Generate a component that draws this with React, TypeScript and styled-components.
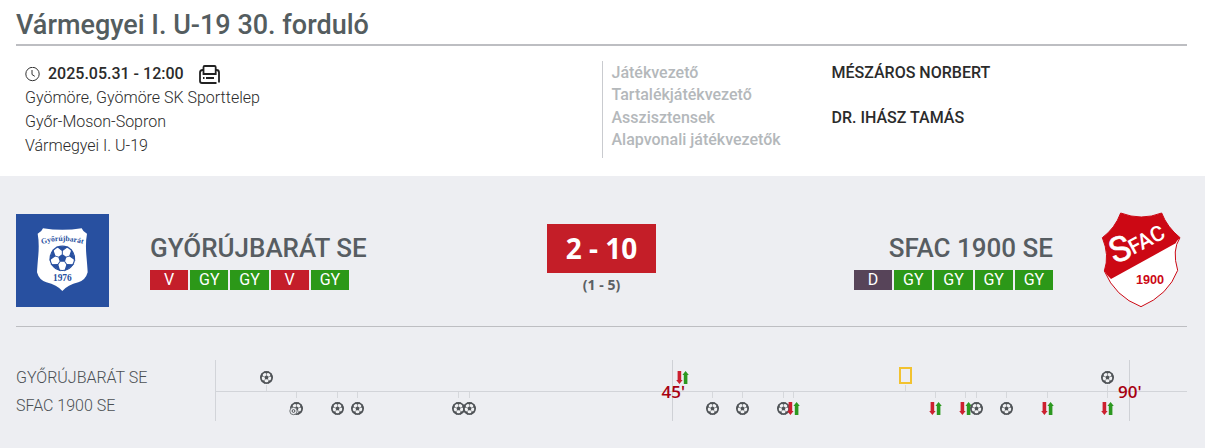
import React from "react";
import styled, { createGlobalStyle } from "styled-components";

const GlobalStyle = createGlobalStyle`
  *, *::before, *::after { box-sizing: border-box; }
  body {
    margin: 0;
    background: #fff;
    color: #2b2b2b;
    font: 16px/24px Roboto, "Open Sans", sans-serif;
  }
  h1, h2, p, dl, dt, dd, ol, ul { margin: 0; padding: 0; }
  ol, ul { list-style: none; }
`;

/* ---------- header ---------- */

const Header = styled.header`
  padding: 0 18px 0 16px;
`;

const Title = styled.h1`
  padding: 9px 0 3px;
  border-bottom: 2px solid #bdbec2;
  color: #545d5f;
  font-size: 27px;
  line-height: 32px;
  font-weight: 500;
`;

const Details = styled.div`
  display: grid;
  grid-template-columns: 1fr 1fr;
  padding: 15px 0 18px;
`;

const Venue = styled.div`
  padding: 1px 0 0 9px;
  font-weight: 300;
`;

const DateRow = styled.div`
  display: flex;
  align-items: center;
  gap: 8px;
  font-weight: 500;
`;

const PrintButton = styled.button`
  display: flex;
  margin-left: 7px;
  padding: 0;
  border: 0;
  background: none;
  color: #222;
  cursor: pointer;
`;

const Officials = styled.dl`
  display: grid;
  grid-template-columns: 220px 1fr;
  align-content: space-between;
  padding: 1px 0 7px 9px;
  border-left: 1px solid #c9cbcf;
  line-height: 22px;
  font-weight: 500;
`;

const Role = styled.dt`
  color: #b4b8bb;
`;

const Official = styled.dd``;

/* ---------- match ---------- */

const Match = styled.main`
  padding: 38px 18px 27px 16px;
  background: #edeef2;
`;

const Scoreboard = styled.section`
  display: grid;
  grid-template-columns: 1fr 109px 1fr;
  padding-bottom: 19px;
  border-bottom: 1px solid #bdbec2;
`;

const Team = styled.div<{ $away?: boolean }>`
  display: flex;
  flex-direction: ${(p) => (p.$away ? "row-reverse" : "row")};
  gap: 41px;
  text-align: ${(p) => (p.$away ? "right" : "left")};
`;

const Crest = styled.svg`
  flex: none;
  width: 93px;
  height: 93px;
  overflow: visible;
`;

const TeamBody = styled.div<{ $away?: boolean }>`
  display: flex;
  flex-direction: column;
  align-items: ${(p) => (p.$away ? "flex-end" : "flex-start")};
  gap: 6px;
  padding-top: 18px;
`;

const TeamName = styled.h2`
  color: #575d62;
  font-size: 26px;
  line-height: 32px;
  font-weight: 500;
`;

const Form = styled.ol`
  display: grid;
  grid-template-columns: repeat(5, 1fr);
  gap: 2px;
  width: 199px;
`;

type Result = "V" | "D" | "GY";
const resultColor: Record<Result, string> = { V: "#c41e2a", D: "#574459", GY: "#2c9818" };

const FormItem = styled.li<{ $result: Result }>`
  background: ${(p) => resultColor[p.$result]};
  color: #fff;
  line-height: 20px;
  text-align: center;
`;

const Score = styled.div`
  padding-top: 10px;
  text-align: center;
  font-family: "Open Sans", sans-serif;
  font-weight: 700;
`;

const FullTime = styled.p`
  background: #c41e28;
  color: #fff;
  font-size: 28px;
  line-height: 49px;
`;

const HalfTime = styled.p`
  color: #5b6064;
  font-size: 14px;
`;

/* ---------- timeline ---------- */

const Timeline = styled.section`
  display: grid;
  grid-template-columns: 199px 1fr;
  margin-top: 33px;
`;

const TimelineNames = styled.div`
  padding-top: 4px;
  color: #4b5054;
  line-height: 28px;
  font-weight: 300;
`;

const Lanes = styled.div`
  position: relative;
  display: grid;
  grid-template-rows: 31px 30px;
  border-left: 1px solid #d2d4d9;
`;

const Lane = styled.ol`
  position: relative;
  & + & { border-top: 1px solid #d2d4d9; }
`;

const Event = styled.li<{ $away?: boolean }>`
  position: absolute;
  ${(p) => (p.$away ? "top: 0;" : "bottom: 0;")}
  display: flex;
  flex-direction: ${(p) => (p.$away ? "column-reverse" : "column")};
  align-items: center;
  gap: ${(p) => (p.$away ? "4px" : "1px")};
  width: 13px;
  margin-left: -7px;

  &::after {
    content: "";
    width: 1px;
    height: 6px;
    background: #d6d8dc;
  }
`;

const Marker = styled.div`
  position: absolute;
  top: 0;
  bottom: 0;
  width: 1px;
  background: #cfd1d6;
`;

const MarkerLabel = styled.span`
  position: absolute;
  top: 20px;
  left: 1px;
  transform: translateX(-50%);
  color: #a80010;
  font-family: "Open Sans", sans-serif;
  font-size: 17px;
  font-weight: 600;
`;

/* ---------- drawings ---------- */

const ClockIcon = () => (
  <svg width="15" height="15" viewBox="0 0 15 15" fill="none" stroke="#333" aria-hidden="true">
    <circle cx="7.5" cy="7" r="6.7" />
    <path d="M7 3v4.500l2.800 1.800" />
  </svg>
);

const PrinterIcon = () => (
  <svg width="21" height="19" viewBox="0 0 21 19" fill="none" stroke="currentColor" strokeWidth="1.8" aria-hidden="true">
    <path d="M4.500 9V2.200Q4.500 1 5.700 1h9.800Q16.700 1 16.700 2.200V9Z" />
    <path d="M4.500 5H3.500Q1 5 1 7.500V16Q1 18 3 18H17.500" />
    <path d="M16.700 5h.800Q20 5 20 7.500V17.500" />
    <path d="M4 13h1.500M7 13h8" />
  </svg>
);

const pentagon = (r: number) =>
  Array.from({ length: 5 }, (_, i) => {
    const a = (i * 72 * Math.PI) / 180;
    return `${(r * Math.sin(a)).toFixed(2)},${(-r * Math.cos(a)).toFixed(2)}`;
  }).join(" ");

const BallShape = ({ dark, light, ring = 1 }: { dark: string; light: string; ring?: number }) => (
  <>
    <circle r={6.5 - ring / 2} fill={light} stroke={dark} strokeWidth={ring} />
    <polygon points={pentagon(2.2)} fill={dark} />
    {[0, 72, 144, 216, 288].map((a) => (
      <g key={a} transform={`rotate(${a})`}>
        <path d="M-2.300 -5.700L0 -4L2.300 -5.700Z" fill={dark} stroke={dark} strokeWidth=".6" />
        <path d="M0 -2V-4" stroke={dark} strokeWidth=".5" />
      </g>
    ))}
  </>
);

const Ball = ({ penalty }: { penalty?: boolean }) => (
  <svg width="13" height="13" viewBox="-6.500 -6.500 13 13" overflow="visible" role="img" aria-label="Gól">
    <BallShape dark="#505458" light="#f0f1f3" ring={1.7} />
    {penalty && (
      <>
        <circle cx="-3" cy="2.500" r="3.700" fill="#edeef2" stroke="#606468" strokeWidth=".9" />
        <circle cx="-3" cy="2.500" r="1.400" fill="none" stroke="#505458" />
      </>
    )}
  </svg>
);

const Swap = () => (
  <svg width="13" height="13" viewBox="0 0 13 13" role="img" aria-label="Csere">
    <path d="M1.600 0h3.600v9H6.600L3.400 13L.2 9H1.600Z" fill="#cc2030" />
    <path d="M7.800 13h3.600V4h1.400L9.600 0L6.400 4H7.800Z" fill="#2c9820" />
  </svg>
);

const Card = () => (
  <svg width="13" height="17" viewBox="0 0 13 17" role="img" aria-label="Sárga lap">
    <rect x="1" y="1" width="11" height="15" fill="none" stroke="#f2c230" strokeWidth="2" />
  </svg>
);

const HomeCrest = () => (
  <Crest viewBox="48 42 279 279" role="img" aria-label="Győrújbarát SE">
    <rect x="48" y="42" width="279" height="279" fill="#2850a0" />
    <path
      d="M129 85Q187 94 245 85Q249 96 261 101Q256 128 259 165Q262 198 263 217Q257 240 235 247Q203 255 187 273Q171 255 139 247Q117 240 111 217Q112 198 115 165Q118 128 113 101Q125 96 129 85Z"
      fill="#fff"
    />
    <path id="crest-arc" d="M119 134Q187 112 255 134" fill="none" />
    <text fill="#2850a0" fontFamily="Liberation Serif, serif" fontWeight="700" fontSize="23" textAnchor="middle">
      <textPath href="#crest-arc" startOffset="50%">Győrújbarát</textPath>
    </text>
    <g transform="translate(187 175) scale(5.900)">
      <BallShape dark="#2850a0" light="#fff" ring={0.6} />
    </g>
    <text x="187" y="244" fill="#2850a0" fontFamily="Liberation Serif, serif" fontWeight="700" fontSize="28" textAnchor="middle">
      1976
    </text>
  </Crest>
);

const AwayCrest = () => (
  <Crest viewBox="-3 27 279 279" role="img" aria-label="SFAC 1900 SE">
    <path
      d="M77 24Q139 48 200 24Q216 66 255 98Q230 135 248 196Q220 270 138 305Q60 275 28 198Q44 150 22 98Q60 70 77 24Z"
      fill="#fff"
      stroke="#cc0814"
      strokeWidth="3"
    />
    <path d="M77 24Q139 48 200 24Q216 66 255 98Q246 106 242 115L48 222Q36 212 28 198Q44 150 22 98Q60 70 77 24Z" fill="#cc0814" />
    <g fill="#fff" fontFamily="Roboto, sans-serif" fontWeight="500">
      <text transform="translate(74 131) rotate(-20)" y="37" fontSize="104" fontWeight="400" stroke="#fff" strokeWidth="2" textAnchor="middle">
        S
      </text>
      <text transform="translate(115 150) rotate(-28)" fontSize="64">
        FAC
      </text>
    </g>
    <text x="165" y="237" fill="#cc0814" fontFamily="Liberation Sans, sans-serif" fontWeight="700" fontSize="38" textAnchor="middle">
      1900
    </text>
  </Crest>
);

/* ---------- data ---------- */

type Kind = "goal" | "penalty" | "swap" | "card";
type MatchEvent = { minute: number; kind: Kind };

const homeEvents: MatchEvent[] = [
  { minute: 5, kind: "goal" },
  { minute: 46, kind: "swap" },
  { minute: 68, kind: "card" },
  { minute: 88, kind: "goal" },
];

const awayEvents: MatchEvent[] = [
  { minute: 8, kind: "penalty" },
  { minute: 12, kind: "goal" },
  { minute: 14, kind: "goal" },
  { minute: 24, kind: "goal" },
  { minute: 25, kind: "goal" },
  { minute: 49, kind: "goal" },
  { minute: 52, kind: "goal" },
  { minute: 56, kind: "goal" },
  { minute: 57, kind: "swap" },
  { minute: 71, kind: "swap" },
  { minute: 74, kind: "swap" },
  { minute: 75, kind: "goal" },
  { minute: 78, kind: "goal" },
  { minute: 82, kind: "swap" },
  { minute: 88, kind: "swap" },
];

const officials = [
  ["Játékvezető", "MÉSZÁROS NORBERT"],
  ["Tartalékjátékvezető", ""],
  ["Asszisztensek", "DR. IHÁSZ TAMÁS"],
  ["Alapvonali játékvezetők", ""],
];

const homeForm: Result[] = ["V", "GY", "GY", "V", "GY"];
const awayForm: Result[] = ["D", "GY", "GY", "GY", "GY"];

// Full time sits at 94% of the axis, leaving room for added time.
const position = (minute: number) => `${(minute / 90) * 94}%`;

const EventIcon = ({ kind }: { kind: Kind }) => {
  if (kind === "swap") return <Swap />;
  if (kind === "card") return <Card />;
  return <Ball penalty={kind === "penalty"} />;
};

const EventLane = ({ events, away }: { events: MatchEvent[]; away?: boolean }) => (
  <Lane>
    {events.map((e, i) => (
      <Event key={i} $away={away} style={{ left: position(e.minute) }}>
        <EventIcon kind={e.kind} />
      </Event>
    ))}
  </Lane>
);

const FormStrip = ({ results }: { results: Result[] }) => (
  <Form>
    {results.map((r, i) => (
      <FormItem key={i} $result={r}>{r}</FormItem>
    ))}
  </Form>
);

export default function App() {
  return (
    <>
      <GlobalStyle />
      <Header>
        <Title>Vármegyei I. U-19 30. forduló</Title>
        <Details>
          <Venue>
            <DateRow>
              <ClockIcon />
              <time dateTime="2025-05-31T12:00">2025.05.31 - 12:00</time>
              <PrintButton type="button" aria-label="Nyomtatás">
                <PrinterIcon />
              </PrintButton>
            </DateRow>
            <p>Gyömöre, Gyömöre SK Sporttelep</p>
            <p>Győr-Moson-Sopron</p>
            <p>Vármegyei I. U-19</p>
          </Venue>
          <Officials>
            {officials.map(([role, name]) => (
              <React.Fragment key={role}>
                <Role>{role}</Role>
                <Official>{name}</Official>
              </React.Fragment>
            ))}
          </Officials>
        </Details>
      </Header>
      <Match>
        <Scoreboard>
          <Team>
            <HomeCrest />
            <TeamBody>
              <TeamName>GYŐRÚJBARÁT SE</TeamName>
              <FormStrip results={homeForm} />
            </TeamBody>
          </Team>
          <Score>
            <FullTime>2 - 10</FullTime>
            <HalfTime>(1 - 5)</HalfTime>
          </Score>
          <Team $away>
            <AwayCrest />
            <TeamBody $away>
              <TeamName>SFAC 1900 SE</TeamName>
              <FormStrip results={awayForm} />
            </TeamBody>
          </Team>
        </Scoreboard>
        <Timeline>
          <TimelineNames>
            <p>GYŐRÚJBARÁT SE</p>
            <p>SFAC 1900 SE</p>
          </TimelineNames>
          <Lanes>
            <EventLane events={homeEvents} />
            <EventLane events={awayEvents} away />
            {[45, 90].map((m) => (
              <Marker key={m} style={{ left: position(m) }}>
                <MarkerLabel>{m}'</MarkerLabel>
              </Marker>
            ))}
          </Lanes>
        </Timeline>
      </Match>
    </>
  );
}
